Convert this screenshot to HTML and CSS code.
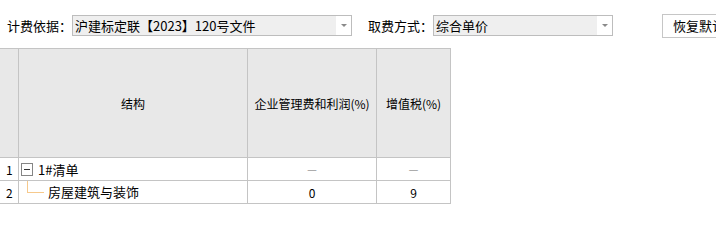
FILE: index.html
```html
<!DOCTYPE html>
<html lang="zh">
<head>
<meta charset="utf-8">
<title>取费设置</title>
<link rel="stylesheet" href="styles.css">
</head>
<body>
<div class="toolbar">
  <span class="label">计费依据：</span>
  <div class="combo combo-wide"><span class="combo-text">沪建标定联【2023】120号文件</span><span class="combo-arrow"></span></div>
  <span class="label label-second">取费方式：</span>
  <div class="combo combo-narrow"><span class="combo-text">综合单价</span><span class="combo-arrow"></span></div>
  <button class="btn">恢复默认</button>
</div>
<div class="grid">
  <div class="cell head idx"></div>
  <div class="cell head">结构</div>
  <div class="cell head">企业管理费和利润(%)</div>
  <div class="cell head">增值税(%)</div>

  <div class="cell idx">1</div>
  <div class="cell tree"><span class="toggle"><span class="minus"></span></span><span class="node-text">1#清单</span></div>
  <div class="cell num dash">－</div>
  <div class="cell num dash">－</div>

  <div class="cell idx">2</div>
  <div class="cell tree child"><span class="connector"></span><span class="child-text">房屋建筑与装饰</span></div>
  <div class="cell num">0</div>
  <div class="cell num">9</div>
</div>
</body>
</html>
```
FILE: styles.css
```css
html, body {
  margin: 0;
  padding: 0;
  background: #ffffff;
  overflow: hidden;
}
body {
  font-family: "Noto Sans CJK SC", "Liberation Sans", sans-serif;
  font-size: 12px;
  color: #000000;
  width: 716px;
  height: 236px;
}
.toolbar {
  display: flex;
  align-items: center;
  padding: 15px 0 0 7px;
  height: 21px;
  white-space: nowrap;
}
.toolbar > * {
  flex-shrink: 0;
}
.label {
  width: 65px;
  line-height: 21px;
  font-size: 13px;
}
.label-second {
  margin-left: 16px;
}
.combo {
  box-sizing: border-box;
  height: 21px;
  border: 1px solid #bdbdbd;
  background: #efefef;
  display: flex;
  align-items: center;
}
.combo-wide { width: 280px; }
.combo-narrow { width: 180px; }
.combo-text {
  flex: 1;
  padding-left: 2px;
  font-size: 13px;
  line-height: 19px;
  overflow: hidden;
}
.combo-arrow {
  width: 15px;
  height: 19px;
  background: #ffffff;
  display: flex;
  align-items: center;
  justify-content: center;
}
.combo-arrow::before {
  content: "";
  width: 0;
  height: 0;
  border-left: 3px solid transparent;
  border-right: 3px solid transparent;
  border-top: 3px solid #8a8a8a;
}
.btn {
  box-sizing: border-box;
  margin-left: 49px;
  height: 24px;
  padding: 0 10px;
  border: 1px solid #c6c6c6;
  background: #ffffff;
  font-family: inherit;
  font-size: 13px;
  color: #000000;
}
.grid {
  margin-top: 12px;
  display: grid;
  grid-template-columns: 19px 229px 129px 74px;
  grid-template-rows: 109px 23px 23px;
  width: 451px;
  border-top: 1px solid #c4c4c4;
}
.cell {
  box-sizing: border-box;
  border-right: 1px solid #c4c4c4;
  border-bottom: 1px solid #c4c4c4;
  display: flex;
  align-items: center;
  white-space: nowrap;
}
.head {
  background: #e8e8e8;
  justify-content: center;
  font-size: 12px;
}
.idx {
  padding-left: 6px;
  font-size: 12px;
}
.head.idx { padding-left: 0; }
.num {
  justify-content: center;
}
.dash {
  color: #9a9a9a;
}
.tree {
  padding-left: 2px;
}
.toggle {
  box-sizing: border-box;
  width: 12px;
  height: 13px;
  border: 1px solid #858585;
  display: flex;
  align-items: center;
  justify-content: center;
  background: #ffffff;
}
.minus {
  width: 6px;
  height: 1px;
  background: #333333;
}
.node-text {
  margin-left: 5px;
  font-size: 13px;
}
.tree.child {
  align-items: flex-start;
  padding-left: 8px;
}
.connector {
  box-sizing: border-box;
  width: 17px;
  height: 12px;
  border-left: 1px solid #f6c98c;
  border-bottom: 1px solid #f6c98c;
}
.child-text {
  margin-left: 4px;
  font-size: 13px;
  line-height: 22px;
}
```
